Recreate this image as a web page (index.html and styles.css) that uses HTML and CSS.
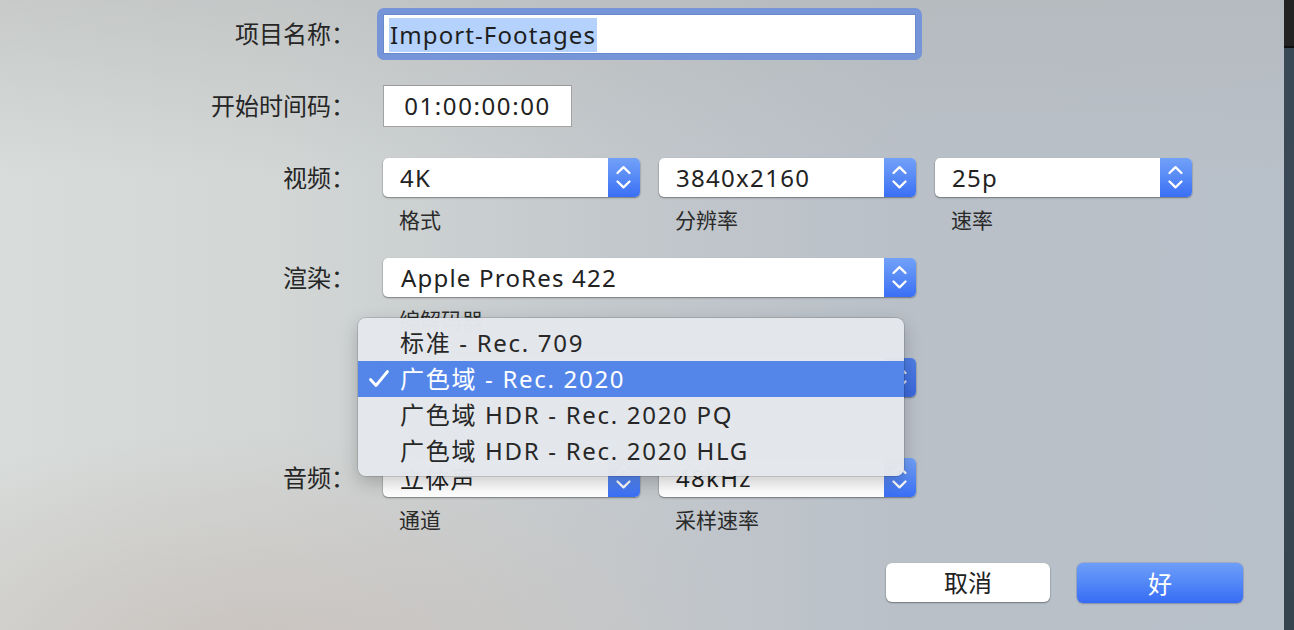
FILE: index.html
```html
<!DOCTYPE html>
<html lang="zh-CN">
<head>
<meta charset="utf-8">
<title>项目设置</title>
<link rel="stylesheet" href="styles.css">
</head>
<body>
<div class="screen">
  <main class="sheet">
    <div class="form">
      <div class="row row-name">
        <div class="lbl">项目名称<span class="colon">：</span></div>
        <div class="focus-ring"><div class="text-field"><span class="sel">Import-Footages</span></div></div>
      </div>
      <div class="row row-tc">
        <div class="lbl">开始时间码<span class="colon">：</span></div>
        <div class="tc-field">01:00:00:00</div>
      </div>
      <div class="row row-video">
        <div class="lbl lbl-pop">视频<span class="colon">：</span></div>
        <div class="cells">
          <div class="cell">
            <div class="popup"><span class="val">4K</span><span class="stepper"><svg viewBox="0 0 32 39" width="32" height="39"><path d="M9.5 15 L15.5 9.2 L21.5 15 M9.5 23.5 L15.5 29.3 L21.5 23.5" fill="none" stroke="#fff" stroke-width="2.3" stroke-linecap="round" stroke-linejoin="round"/></svg></span></div>
            <div class="cap">格式</div>
          </div>
          <div class="cell">
            <div class="popup"><span class="val">3840x2160</span><span class="stepper"><svg viewBox="0 0 32 39" width="32" height="39"><path d="M9.5 15 L15.5 9.2 L21.5 15 M9.5 23.5 L15.5 29.3 L21.5 23.5" fill="none" stroke="#fff" stroke-width="2.3" stroke-linecap="round" stroke-linejoin="round"/></svg></span></div>
            <div class="cap">分辨率</div>
          </div>
          <div class="cell">
            <div class="popup"><span class="val">25p</span><span class="stepper"><svg viewBox="0 0 32 39" width="32" height="39"><path d="M9.5 15 L15.5 9.2 L21.5 15 M9.5 23.5 L15.5 29.3 L21.5 23.5" fill="none" stroke="#fff" stroke-width="2.3" stroke-linecap="round" stroke-linejoin="round"/></svg></span></div>
            <div class="cap">速率</div>
          </div>
        </div>
      </div>
      <div class="row">
        <div class="lbl lbl-pop">渲染<span class="colon">：</span></div>
        <div class="cells cells-col">
          <div class="cell">
            <div class="popup popup-wide"><span class="val">Apple ProRes 422</span><span class="stepper"><svg viewBox="0 0 32 39" width="32" height="39"><path d="M9.5 15 L15.5 9.2 L21.5 15 M9.5 23.5 L15.5 29.3 L21.5 23.5" fill="none" stroke="#fff" stroke-width="2.3" stroke-linecap="round" stroke-linejoin="round"/></svg></span></div>
            <div class="cap cap-hidden">编解码器</div>
          </div>
          <div class="cell">
            <div class="popup popup-wide"><span class="val"></span><span class="stepper stepper-dark"><svg viewBox="0 0 32 39" width="32" height="39"><path d="M9.5 15 L15.5 9.2 L21.5 15 M9.5 23.5 L15.5 29.3 L21.5 23.5" fill="none" stroke="#dfe6f5" stroke-width="2.3" stroke-linecap="round" stroke-linejoin="round"/></svg></span></div>
            <div class="cap cap-empty"></div>
          </div>
        </div>
      </div>
      <div class="row">
        <div class="lbl lbl-pop">音频<span class="colon">：</span></div>
        <div class="cells">
          <div class="cell">
            <div class="popup"><span class="val">立体声</span><span class="stepper"><svg viewBox="0 0 32 39" width="32" height="39"><path d="M9.5 15 L15.5 9.2 L21.5 15 M9.5 23.5 L15.5 29.3 L21.5 23.5" fill="none" stroke="#fff" stroke-width="2.3" stroke-linecap="round" stroke-linejoin="round"/></svg></span></div>
            <div class="cap">通道</div>
          </div>
          <div class="cell">
            <div class="popup"><span class="val">48kHz</span><span class="stepper"><svg viewBox="0 0 32 39" width="32" height="39"><path d="M9.5 15 L15.5 9.2 L21.5 15 M9.5 23.5 L15.5 29.3 L21.5 23.5" fill="none" stroke="#fff" stroke-width="2.3" stroke-linecap="round" stroke-linejoin="round"/></svg></span></div>
            <div class="cap">采样速率</div>
          </div>
        </div>
      </div>
    </div>

    <div class="actions">
      <button class="btn">取消</button>
      <button class="btn btn-primary">好</button>
    </div>

    <div class="menu">
      <div class="menu-item">标准 - Rec. 709</div>
      <div class="menu-item is-active"><svg class="check" viewBox="0 0 24 24" width="24" height="24"><path d="M3.5 12.5 L9 18.5 L20.5 4.5" fill="none" stroke="#fff" stroke-width="2.8" stroke-linecap="round" stroke-linejoin="round"/></svg>广色域 - Rec. 2020</div>
      <div class="menu-item">广色域 HDR - Rec. 2020 PQ</div>
      <div class="menu-item">广色域 HDR - Rec. 2020 HLG</div>
    </div>
  </main>
  <div class="desk"><div class="desk-top"></div></div>
</div>
</body>
</html>
```

FILE: styles.css
```css
* { box-sizing: border-box; }

html, body {
  margin: 0;
  padding: 0;
}

body {
  width: 1294px;
  height: 630px;
  overflow: hidden;
  font-family: "Noto Sans", "Noto Sans CJK SC", sans-serif;
  color: #262626;
}

.screen {
  display: flex;
  width: 1294px;
  height: 630px;
}

.sheet {
  position: relative;
  width: 1284px;
  height: 630px;
  background:
    radial-gradient(ellipse 520px 230px at 260px 660px, rgba(200, 193, 189, 0.95), rgba(200, 193, 189, 0) 100%),
    linear-gradient(to bottom, rgba(178, 180, 180, 0.45) 0%, rgba(178, 180, 180, 0) 28%),
    linear-gradient(to right, #d8dcda 0%, #d2d6d5 22%, #c3c8cc 48%, #b9c0c8 70%, #b8c0c9 100%);
}

.desk {
  width: 10px;
  height: 630px;
  background: linear-gradient(to bottom, #3b4a57, #36444f);
}

.desk-top {
  height: 48px;
  background: #232323;
  border-bottom: 2px solid #0f0f0f;
}

/* form */
.form {
  display: flex;
  flex-direction: column;
  gap: 25px;
  padding-top: 8px;
}

.row {
  display: flex;
  align-items: flex-start;
  gap: 28px;
}

.row-video { margin-top: 6px; }

.lbl {
  width: 355px;
  flex: none;
  text-align: right;
  font-size: 24px;
  color: #262626;
  white-space: nowrap;
  overflow: hidden;
}

.colon {
  font-family: "Noto Sans CJK JP", "Noto Sans CJK SC", sans-serif;
  line-height: 1;
}

.row-name .lbl { height: 52px; line-height: 52px; }
.row-tc .lbl { height: 42px; line-height: 42px; }
.lbl-pop { height: 39px; line-height: 39px; }

.focus-ring {
  margin-left: -6px;
  width: 545px;
  height: 52px;
  padding: 6px;
  border-radius: 7px;
  background: #7694d8;
}

.text-field {
  height: 40px;
  background: #fff;
  border: 1px solid #6a88cc;
  display: flex;
  align-items: center;
  padding-left: 5px;
}

.sel {
  display: inline-block;
  height: 34px;
  line-height: 34px;
  margin-top: 2px;
  padding: 0 1px;
  background: #b4d2fb;
  font-size: 24px;
  letter-spacing: 1.1px;
  color: #1e1e1e;
}

.tc-field {
  width: 189px;
  height: 42px;
  background: #fff;
  border: 1px solid #a3a3a3;
  border-top-color: #9a9a9a;
  text-align: center;
  line-height: 40px;
  font-size: 24px;
  letter-spacing: 1.6px;
  color: #222;
}

/* popups */
.cells {
  display: flex;
  gap: 19px;
}

.cells-col {
  flex-direction: column;
  gap: 25px;
}

.cell {
  display: flex;
  flex-direction: column;
}

.popup {
  position: relative;
  width: 257px;
  height: 39px;
  display: flex;
  align-items: center;
  justify-content: space-between;
  background: #fff;
  border-radius: 5px;
  box-shadow: 0 0.5px 0 0.5px rgba(0, 0, 0, 0.12), 0 1px 2px rgba(0, 0, 0, 0.3);
}

.popup-wide { width: 533px; }

.val {
  padding-left: 17px;
  font-size: 24px;
  letter-spacing: 1.3px;
  color: #222;
  white-space: nowrap;
}

.popup-wide .val { padding-left: 18px; letter-spacing: 1.2px; }

.stepper {
  width: 32px;
  height: 39px;
  flex: none;
  border-radius: 0 5px 5px 0;
  background: linear-gradient(to bottom, #72a1f8 0%, #5a8cf6 45%, #3a6ff5 100%);
  display: block;
}

.stepper svg { display: block; }

.stepper-dark {
  background: linear-gradient(to bottom, #4f7fe6 0%, #3a68dc 100%);
}

.cap {
  margin-top: 10px;
  padding-left: 16px;
  height: 26px;
  font-size: 21px;
  line-height: 26px;
  color: #2a2a2a;
}

.cap-hidden { color: #2a2a2a; }

/* buttons */
.actions {
  display: flex;
  justify-content: flex-end;
  gap: 27px;
  padding-right: 41px;
  margin-top: 30px;
}

.btn {
  width: 164px;
  height: 39px;
  border: none;
  border-radius: 6px;
  background: #fff;
  font-family: "Noto Sans", "Noto Sans CJK SC", sans-serif;
  font-size: 24px;
  line-height: 39px;
  padding: 0;
  color: #222;
  box-shadow: 0 0.5px 0 0.5px rgba(0, 0, 0, 0.12), 0 1px 2px rgba(0, 0, 0, 0.3);
}

.btn-primary {
  width: 166px;
  height: 40px;
  color: #fff;
  background: linear-gradient(to bottom, #6e9ef8 0%, #5287f7 50%, #376cf5 100%);
  box-shadow: 0 0 0 0.5px rgba(40, 80, 200, 0.35), 0 1px 2px rgba(0, 0, 0, 0.2);
}

/* popup menu */
.menu {
  position: absolute;
  left: 358px;
  top: 318px;
  width: 546px;
  padding: 7px 0 7px;
  border-radius: 8px;
  background: rgba(228, 231, 235, 0.985);
  box-shadow: 0 0 0 1px rgba(0, 0, 0, 0.12), 0 6px 18px rgba(0, 0, 0, 0.22);
}

.menu-item {
  position: relative;
  height: 36px;
  line-height: 36px;
  padding-left: 42px;
  font-size: 24px;
  letter-spacing: 1.7px;
  color: #272727;
  white-space: nowrap;
}

.menu-item.is-active {
  background: #5486ea;
  color: #fff;
}

.check {
  position: absolute;
  left: 9px;
  top: 6px;
}
```
